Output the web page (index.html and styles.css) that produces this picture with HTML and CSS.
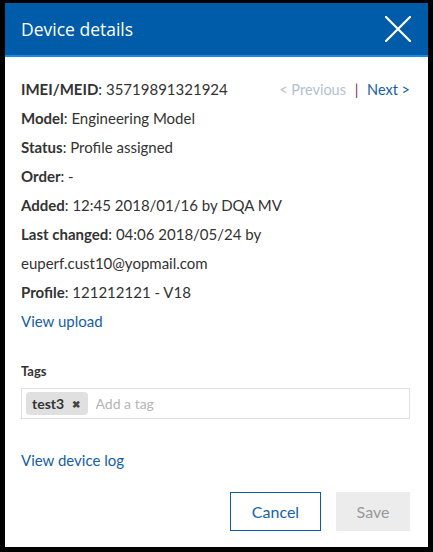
FILE: index.html
```html
<!DOCTYPE html>
<html lang="en">
<head>
  <meta charset="UTF-8" />
  <title>Device details</title>
  <link rel="stylesheet" href="styles.css">
</head>
<body>

  <div class="dialog">
    <div class="dialog-header">
      <h1>Device details</h1>
      <button class="close" aria-label="Close">
        <svg width="26" height="26" viewBox="0 0 26 26">
          <path d="M1 1 L25 25 M25 1 L1 25" stroke="#fff" stroke-width="2.2" stroke-linecap="round" fill="none" />
        </svg>
      </button>
    </div>

    <div class="dialog-body">
      <div class="row first">
        <span><b>IMEI/MEID</b>: 35719891321924</span>
        <span class="pager">
          <span class="prev">&lt; Previous</span>
          <span class="sep">|</span>
          <a href="#" class="next">Next &gt;</a>
        </span>
      </div>
      <div class="row"><b>Model</b>: Engineering Model</div>
      <div class="row"><b>Status</b>: Profile assigned</div>
      <div class="row"><b>Order</b>: -</div>
      <div class="row"><b>Added</b>: 12:45 2018/01/16 by DQA MV</div>
      <div class="row"><b>Last changed</b>: 04:06 2018/05/24 by</div>
      <div class="row">euperf.cust10@yopmail.com</div>
      <div class="row"><b>Profile</b>: 121212121 - V18</div>
      <div class="row"><a href="#">View upload</a></div>

      <div class="tags">
        <label for="tag">Tags</label>
        <div class="tag-input">
          <span class="chip">test3 <span class="chip-x">&#x2716;</span></span>
          <input type="text" id="tag" placeholder="Add a tag" />
        </div>
      </div>

      <div class="row log"><a href="#">View device log</a></div>
    </div>

    <div class="dialog-footer">
      <button class="btn cancel">Cancel</button>
      <button class="btn save" disabled>Save</button>
    </div>
  </div>

</body>
</html>
```

FILE: styles.css
```css
/* Fondo */
body {
  background-color: #000;
  margin: 0;
  padding: 3px 5px 5px 5px;
  font-family: Lato, "Open Sans", sans-serif;
}

.dialog {
  background-color: #fff;
  width: 423px;
  height: 544px;
  display: flex;
  flex-direction: column;
}

/* Cabecera azul */
.dialog-header {
  background-color: #005ca8;
  border-bottom: 2px solid #1b8ae0;
  height: 52px;
  display: flex;
  align-items: center;
  justify-content: space-between;
  padding: 0 17px 0 16px;
}

.dialog-header h1 {
  margin: 0;
  color: #fff;
  font-family: "Open Sans", sans-serif;
  font-weight: 400;
  font-size: 17.5px;
}

.close {
  background: none;
  border: none;
  padding: 0;
  width: 26px;
  height: 26px;
  cursor: pointer;
}

.dialog-body {
  padding: 18px 18px 0 16px;
  color: #333;
  font-size: 15px;
}

.row {
  line-height: 29px;
  height: 29px;
}

.row b {
  font-weight: 700;
}

.row.first {
  display: flex;
  justify-content: space-between;
}

.pager {
  font-size: 14.5px;
}

.pager .prev {
  color: #b3bfd0;
}

.pager .sep {
  color: #8e2a62;
  margin: 0 5px;
}

a {
  color: #1460a8;
  text-decoration: none;
}

.tags {
  margin-top: 25px;
}

.tags label {
  display: block;
  font-weight: 700;
  font-size: 13px;
  line-height: 20px;
}

.tag-input {
  margin-top: 7px;
  height: 31px;
  box-sizing: border-box;
  border: 1px solid #e0e0e0;
  display: flex;
  align-items: center;
  padding: 0 4px;
}

.chip {
  background-color: #e0e0e0;
  border-radius: 4px;
  padding: 0 8px 0 6px;
  height: 23px;
  line-height: 23px;
  font-size: 14px;
  font-weight: 700;
  color: #333;
}

.chip-x {
  font-size: 10px;
  margin-left: 4px;
  color: #444;
  position: relative;
  top: -1px;
}

.tag-input input {
  border: none;
  outline: none;
  font-family: inherit;
  font-size: 14px;
  margin-left: 8px;
  padding: 0;
  flex: 1;
}

.tag-input input::placeholder {
  color: #b5b5b5;
}

.row.log {
  margin-top: 27px;
}

/* Botones */
.dialog-footer {
  margin-top: 17px;
  display: flex;
  justify-content: flex-end;
  gap: 15px;
  padding-right: 18px;
}

.btn {
  height: 39px;
  font-family: inherit;
  font-size: 16px;
  cursor: pointer;
}

.cancel {
  width: 91px;
  background-color: #fff;
  border: 1px solid #0a5ca8;
  color: #1460a8;
}

.save {
  width: 74px;
  background-color: #ececec;
  border: none;
  color: #999;
}
```
